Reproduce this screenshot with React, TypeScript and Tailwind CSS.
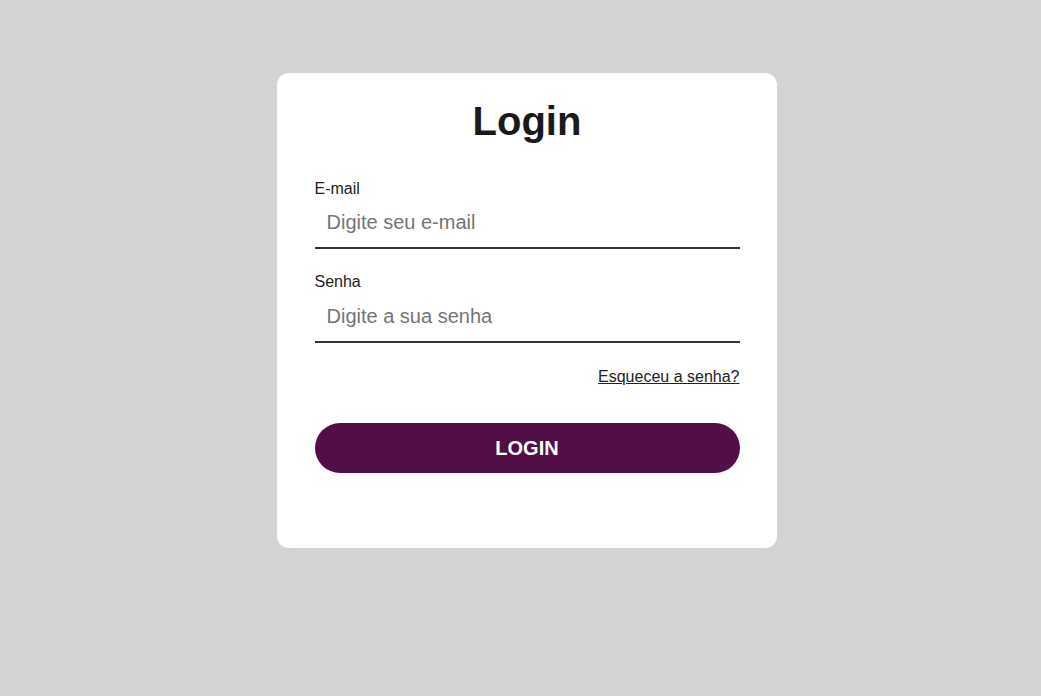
import { useState } from 'react';

export default function App() {
  const [email, setEmail] = useState('');
  const [senha, setSenha] = useState('');

  return (
    <div
      className="min-h-screen w-full bg-[#d3d3d3] pt-[73px] pl-[13px]"
      style={{ fontFamily: '"Liberation Sans", Arial, sans-serif' }}
    >
      <form
        className="mx-auto flex w-[500px] flex-col items-center rounded-xl bg-white pt-[25px] pb-[75px]"
        onSubmit={(e) => e.preventDefault()}
      >
        <h1 className="text-[40px] leading-[46px] font-bold text-[#1a1a1a]">Login</h1>

        {/* E-mail */}
        <div className="mt-[36px] flex w-[85%] flex-col">
          <label className="text-base leading-[18px] text-[#222]">E-mail</label>
          <input
            type="email"
            value={email}
            onChange={(e) => setEmail(e.target.value)}
            placeholder="Digite seu e-mail"
            className="h-[51px] border-b-2 border-[#333] px-3 text-[20px] text-[#222] outline-none placeholder:text-[#757575]"
          />
        </div>

        {/* Senha */}
        <div className="mt-[24px] flex w-[85%] flex-col">
          <label className="text-base leading-[18px] text-[#222]">Senha</label>
          <input
            type="password"
            value={senha}
            onChange={(e) => setSenha(e.target.value)}
            placeholder="Digite a sua senha"
            className="h-[52px] border-b-2 border-[#333] px-3 text-[20px] text-[#222] outline-none placeholder:text-[#757575]"
          />
        </div>

        <div className="mt-[25px] flex w-[85%] justify-end">
          <a href="#" className="text-base leading-[18px] text-[#222] underline">
            Esqueceu a senha?
          </a>
        </div>

        <button
          type="submit"
          className="mt-[37px] h-[50px] w-[85%] rounded-full bg-[#520e46] text-[20px] font-bold text-white"
        >
          LOGIN
        </button>
      </form>
    </div>
  );
}
